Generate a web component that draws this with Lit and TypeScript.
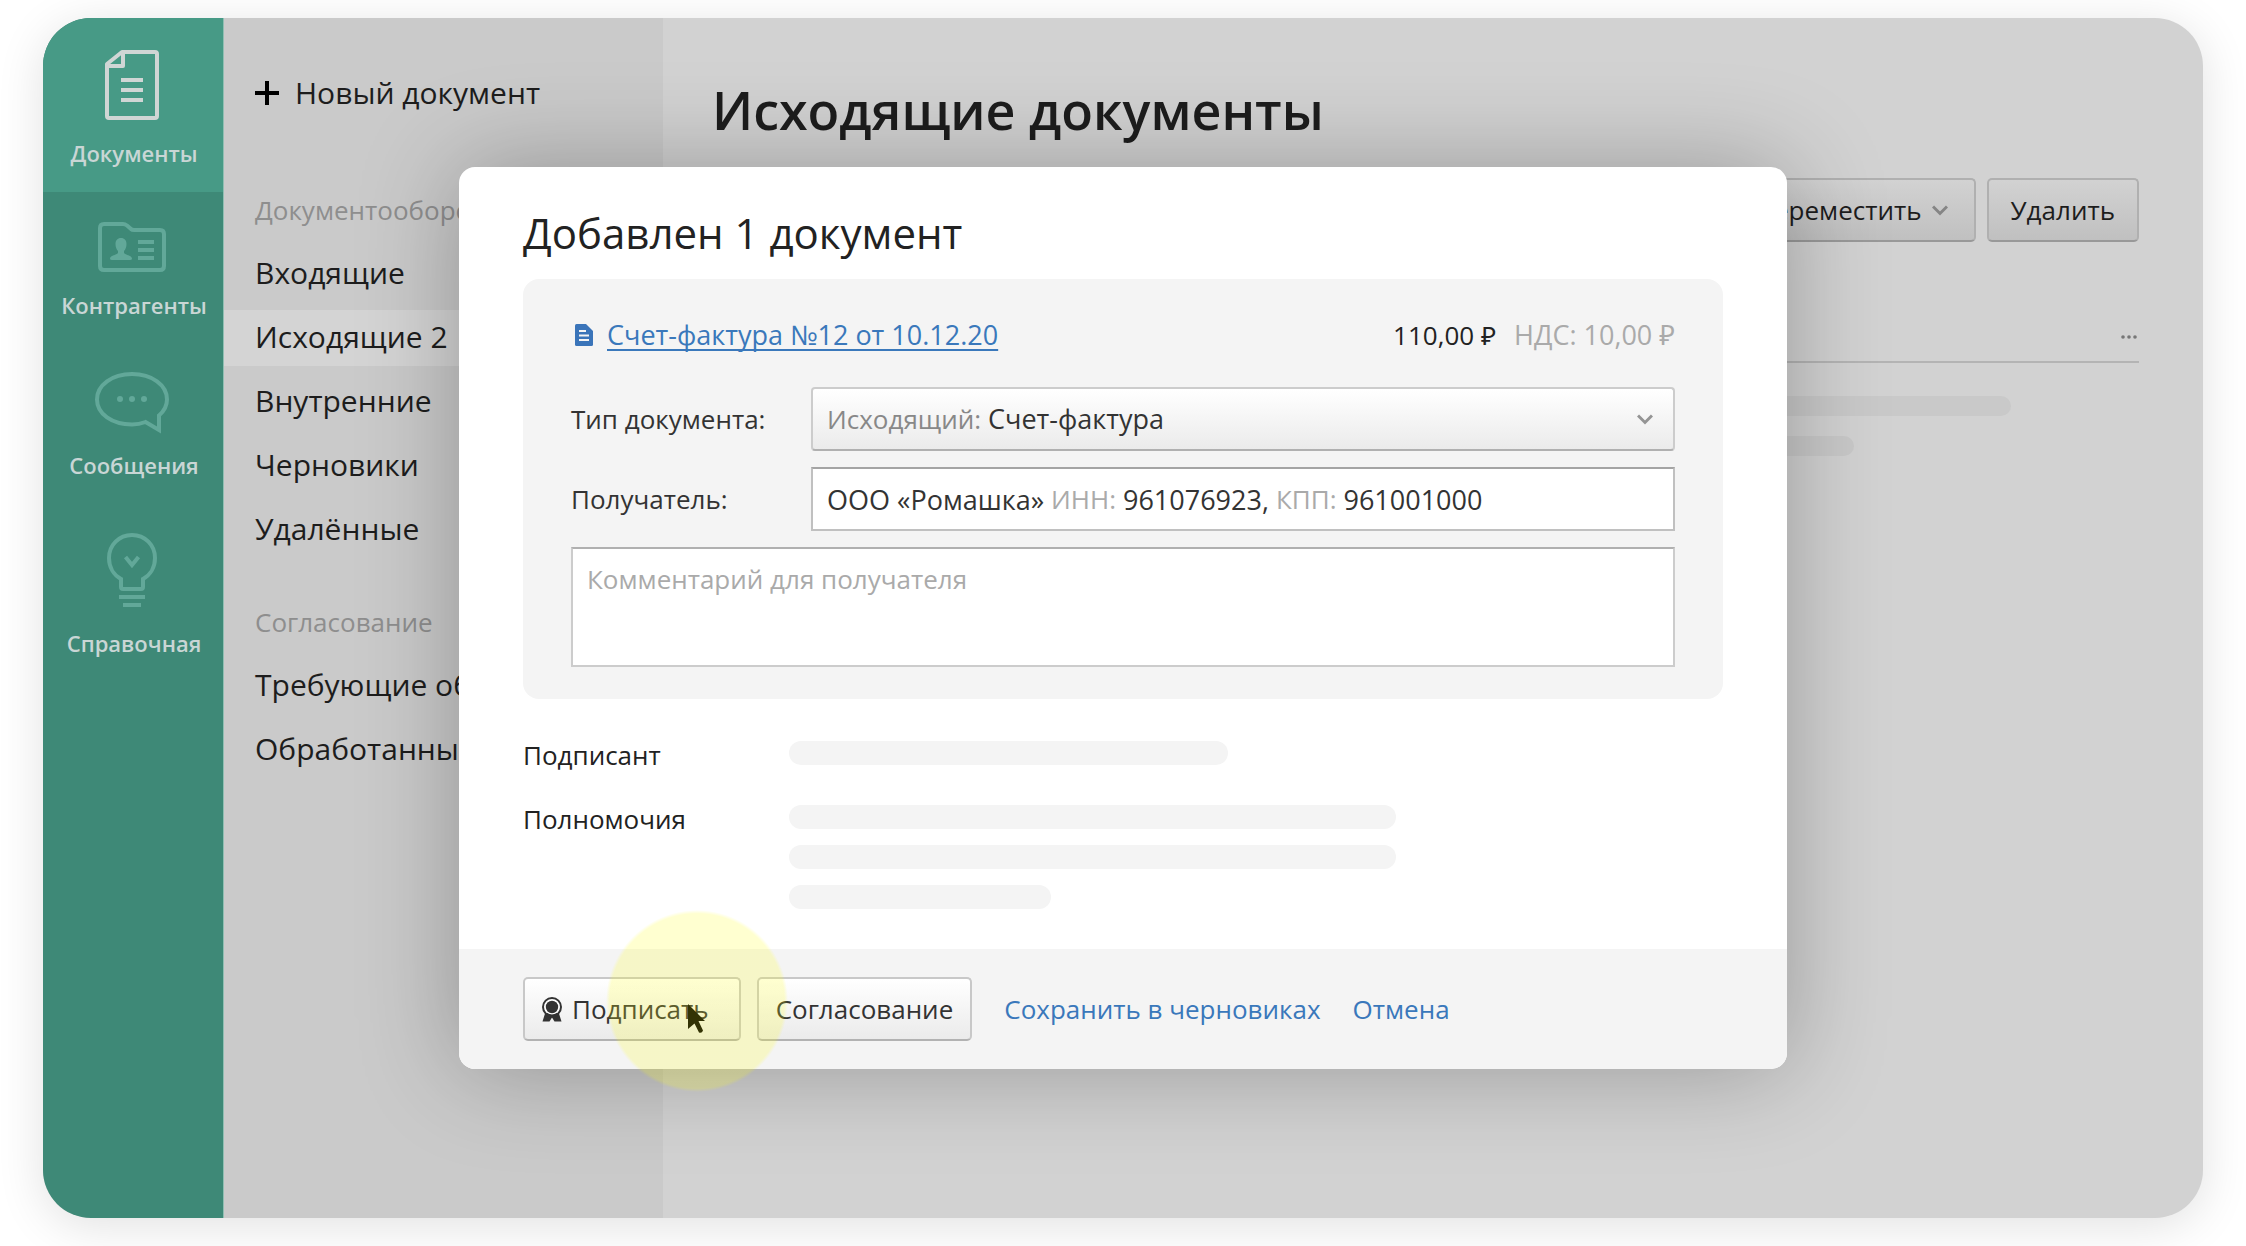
import { LitElement, html, css, svg } from "lit";
import { customElement } from "lit/decorators.js";

const icons = {
  documents: svg`<svg class="icon" width="54" height="70" viewBox="0 0 54 70" fill="none" stroke="currentColor" stroke-width="4" stroke-linejoin="round">
    <path d="M17 2H50Q52 2 52 4V66Q52 68 50 68H4Q2 68 2 66V14Z"/><path d="M18 2V16H2"/><path d="M16 30H38M16 40H38M16 50H38"/></svg>`,
  partners: svg`<svg class="icon" width="68" height="50" viewBox="0 0 68 50" fill="none" stroke="currentColor" stroke-width="4" stroke-linejoin="round">
    <path d="M6 2H25Q27 2 29 3.500L33 7Q34 8 36 8H62Q66 8 66 12V44Q66 48 62 48H6Q2 48 2 44V6Q2 2 6 2Z"/>
    <path d="M40 20H56M40 28H56M40 36H56"/>
    <path stroke="none" fill="currentColor" d="M23 16C26.500 16 28.500 18.500 28.500 22C28.500 25 27.500 27.500 26 29V31C27 33 34 33.500 34 36.500Q34 38 32 38H14Q12 38 12 36.500C12 33.500 19 33 20 31V29C18.500 27.500 17.500 25 17.500 22C17.500 18.500 19.500 16 23 16Z"/></svg>`,
  messages: svg`<svg class="icon" width="74" height="62" viewBox="0 0 74 62" fill="none" stroke="currentColor" stroke-width="4">
    <path d="M64 43.500V58L50.500 50Q44 52.500 37 52.500C17 52.500 2 42 2 27.500S17 2 37 2S72 13 72 27.500Q72 36.500 64 43.500Z"/>
    <g fill="currentColor" stroke="none"><circle cx="25" cy="27" r="3"/><circle cx="37" cy="27" r="3"/><circle cx="49" cy="27" r="3"/></g></svg>`,
  help: svg`<svg class="icon" width="50" height="74" viewBox="0 0 50 74" fill="none" stroke="currentColor" stroke-width="4">
    <path d="M14 54V46C6.500 42 2 34 2 25C2 12 12 2 25 2S48 12 48 25C48 34 43.500 42 36 46V54Q36 56 34 56H16Q14 56 14 54Z"/>
    <path d="M18.500 24L25 32L31.500 24"/><path d="M12 64H38M16 72H34"/></svg>`,
  plus: svg`<svg width="24" height="24" viewBox="0 0 24 24" stroke="#000" stroke-width="4"><path d="M12 0V24M0 12H24"/></svg>`,
  chevron: svg`<svg class="chevron" width="16" height="11" viewBox="0 0 16 11" fill="none" stroke="currentColor" stroke-width="3"><path d="M1 1.500L8 8.500L15 1.500"/></svg>`,
  file: svg`<svg width="18" height="22" viewBox="0 0 18 22"><path fill="#3a74b9" d="M1.500 0H11L18 7V20.500Q18 22 16.500 22H1.500Q0 22 0 20.500V1.500Q0 0 1.500 0Z"/><path stroke="#f4f4f4" stroke-width="2" d="M4 7H11M4 11.500H14M4 16H14"/></svg>`,
  seal: svg`<svg width="20" height="25" viewBox="0 0 20 25"><path fill="#333" d="M3.500 15L0.500 24.500H7.500L10 20.500L12.500 24.500H19.500L16.500 15Z"/><circle cx="10" cy="10" r="9" fill="#fff" stroke="#333" stroke-width="2"/><circle cx="10" cy="10" r="6.200" fill="#333"/><path d="M4 17Q10 21 16 17" fill="none" stroke="#333" stroke-width="3"/></svg>`,
  pointer: svg`<svg class="pointer" width="18" height="30" viewBox="0 0 18 30"><path fill="#000" d="M0 0L17 17H10.500L15 26.500Q14 29.500 11 28.500L6.500 19.500L0 25Z"/></svg>`,
};

const sections = [
  { label: "Документы", icon: icons.documents, cls: "documents active" },
  { label: "Контрагенты", icon: icons.partners, cls: "partners" },
  { label: "Сообщения", icon: icons.messages, cls: "messages" },
  { label: "Справочная", icon: icons.help, cls: "help" },
];

const folders = [
  { title: "Документооборот", items: ["Входящие", "Исходящие 2", "Внутренние", "Черновики", "Удалённые"] },
  { title: "Согласование", items: ["Требующие обработки", "Обработанные"] },
];

@customElement("app-root")
export class AppRoot extends LitElement {
  static styles = css`
    :host { display: block; background: #fff; overflow: hidden; font-family: "Open Sans", "Noto Sans", sans-serif; font-size: 26px; line-height: 40px; color: #222; }
    * { box-sizing: border-box; }
    button, input, select, textarea { font: inherit; color: inherit; margin: 0; }
    a { color: inherit; text-decoration: none; }
    h1, h2, h3, ul { margin: 0; padding: 0; font-weight: 400; list-style: none; }
    svg { flex: none; display: block; }
    .card { position: relative; display: flex; margin: 18px 43px 28px; min-height: calc(100vh - 46px); border-radius: 48px; background: #d2d2d2; box-shadow: 0 8px 48px rgba(0, 0, 0, 0.12); }
    .rail { flex: none; width: 181px; background: #3e8977; border-right: 1px solid #8fbfb2; border-radius: 48px 0 0 48px; overflow: hidden; color: #c9d6d5; }
    .section { display: flex; flex-direction: column; align-items: center; padding-left: 2px; font-size: 22px; font-weight: 600; line-height: 32px; }
    .section .icon { color: #62a899; margin-right: 4px; }
    .section.active { background: #479a86; }
    .section.active .icon { color: #d0d6d5; }
    .documents { height: 174px; padding-top: 32px; gap: 17px; }
    .partners { padding-top: 30px; gap: 17px; }
    .messages { padding-top: 51px; gap: 15px; }
    .help { padding-top: 52px; gap: 20px; }
    .folders { flex: none; width: 439px; background: #cacaca; padding-top: 47px; font-size: 30px; white-space: nowrap; }
    .new { display: flex; align-items: center; gap: 16px; height: 56px; padding: 0 31px; border: 0; background: none; color: #1d1d1d; }
    .group { padding-top: 44px; }
    .new + .group { padding-top: 69px; }
    .group-title { padding-left: 31px; margin-bottom: 16px; font-size: 26px; line-height: 40px; color: #8e8e8e; }
    .list { display: flex; flex-direction: column; gap: 8px; }
    .folder { display: block; height: 56px; line-height: 54px; padding-left: 31px; color: #1d1d1d; }
    .folder.current { background: #d4d4d4; }
    .main { flex: 1; min-width: 0; padding: 56px 64px 0 49px; }
    .title { font-size: 52px; line-height: 72px; font-weight: 600; color: #1d1d1d; }
    .toolbar { display: flex; justify-content: flex-end; gap: 11px; margin-top: 32px; }
    .button { display: flex; align-items: center; gap: 10px; height: 64px; padding: 0 17px; border: 2px solid #c8c8c8; border-bottom-color: #b2b2b2; border-radius: 5px; background: linear-gradient(#fff, #ebebeb); color: #333; }
    .button.sign { padding-right: 30px; }
    .toolbar .button { padding: 0 22px; border-color: #b0b0b0; border-bottom-color: #999; background: linear-gradient(#d2d2d2, #c0c0c0); color: #1d1d1d; }
    .toolbar .chevron { color: #858585; margin-right: 4px; }
    .head { display: flex; justify-content: flex-end; align-items: flex-end; height: 121px; padding-bottom: 14px; border-bottom: 2px solid #b4b4b4; }
    .more { border: 0; background: none; padding: 8px 2px; display: flex; gap: 2px; color: #777; }
    .rows { display: flex; flex-direction: column; gap: 20px; padding-top: 33px; }
    .row { height: 20px; border-radius: 10px; background: #c9c9c9; }
    .row.long { width: 91%; }
    .row.short { width: 80%; }
    .overlay { position: absolute; inset: 0; display: flex; align-items: center; justify-content: center; }
    .modal { position: relative; width: calc(100% - 160px); max-width: 1328px; border-radius: 16px; background: #fff; box-shadow: 0 0 100px rgba(0, 0, 0, 0.28); }
    .body { padding: 38px 64px 40px; }
    .modal-title { font-size: 42px; line-height: 56px; }
    .panel { margin: 18px 0 36px; padding: 36px 48px 32px; border-radius: 16px; background: #f4f4f4; color: #333; display: grid; grid-template-columns: 240px minmax(0, 1fr); row-gap: 16px; align-items: center; }
    .doc { grid-column: 1 / -1; display: flex; align-items: center; margin-bottom: 16px; padding-left: 4px; }
    .doc-link { margin-left: 14px; font-size: 27px; color: #3a78bb; text-decoration: underline; text-decoration-thickness: 2px; text-underline-offset: 4px; text-decoration-skip-ink: none; }
    .sum { margin-left: auto; color: #222; }
    .vat { margin-left: 18px; font-size: 27px; color: #aaa; }
    .field { display: flex; align-items: center; gap: 7px; height: 64px; padding: 0 14px; border: 2px solid #c0c0c0; border-top-color: #a4a4a4; background: #fff; font-size: 27px; }
    .field.pick { border-color: #ccc; border-bottom-color: #b0b0b0; border-radius: 4px; background: linear-gradient(#fff, #ebebeb); }
    .pick .chevron { color: #949494; margin-right: 6px; }
    .hint { color: #888; font-size: 26px; }
    .dim { color: #aaa; font-size: 26px; }
    .pick select { flex: 1; appearance: none; border: 0; padding: 0; background: none; outline: 0; height: 56px; }
    .value { field-sizing: content; border: 0; padding: 0; background: none; outline: 0; height: 56px; }
    .comment { grid-column: 1 / -1; display: block; width: 100%; height: 120px; padding: 10px 14px; border: 2px solid #ccc; border-top-color: #b0b0b0; border-radius: 0; resize: none; outline: 0; background: #fff; line-height: 40px; }
    .comment::placeholder { color: #aaa; opacity: 1; }
    .facts { display: grid; grid-template-columns: 266px minmax(0, 1fr); row-gap: 24px; }
    .bars { display: flex; flex-direction: column; gap: 16px; padding-top: 6px; }
    .bar { height: 24px; border-radius: 12px; background: #f4f4f4; }
    .bar.half { width: 47%; }
    .bar.wide { width: 65%; }
    .bar.small { width: 28%; }
    .footer { display: flex; align-items: center; padding: 28px 64px; background: #f4f4f4; border-radius: 0 0 16px 16px; }
    .footer .button + .button { margin-left: 16px; }
    .link { margin-left: 32px; padding: 0; border: 0; background: none; color: #3a78bb; }
    .pointer { position: absolute; left: 229px; bottom: 35px; }
    .halo { position: absolute; left: 147px; bottom: -23px; width: 182px; height: 182px; border-radius: 50%; background: radial-gradient(closest-side, rgba(255, 255, 20, 0.2) 96%, rgba(255, 255, 20, 0)); pointer-events: none; }
  `;

  render() {
    return html`
      <div class="card">
        <nav class="rail">
          ${sections.map((s) => html`<a class="section ${s.cls}" href="#">${s.icon}<span>${s.label}</span></a>`)}
        </nav>
        <nav class="folders">
          <button class="new" type="button">${icons.plus}Новый документ</button>
          ${folders.map((g) => html`
            <section class="group">
              <h3 class="group-title">${g.title}</h3>
              <ul class="list">
                ${g.items.map((i) => html`<li><a class="folder ${i === "Исходящие 2" ? "current" : ""}" href="#">${i}</a></li>`)}
              </ul>
            </section>`)}
        </nav>
        <main class="main">
          <h1 class="title">Исходящие документы</h1>
          <div class="toolbar">
            <button class="button" type="button">Переместить ${icons.chevron}</button>
            <button class="button" type="button">Удалить</button>
          </div>
          <div class="head">
            <button class="more" type="button">
              <svg width="16" height="4" viewBox="0 0 16 4" fill="currentColor"><circle cx="2" cy="2" r="1.800"/><circle cx="8" cy="2" r="1.800"/><circle cx="14" cy="2" r="1.800"/></svg>
            </button>
          </div>
          <div class="rows"><div class="row long"></div><div class="row short"></div></div>
        </main>
        <div class="overlay">
          <div class="modal" role="dialog" aria-labelledby="modal-title">
            <div class="body">
              <h2 class="modal-title" id="modal-title">Добавлен 1 документ</h2>
              <div class="panel">
                <div class="doc">
                  ${icons.file}<a class="doc-link" href="#">Счет-фактура №12 от 10.12.20</a>
                  <span class="sum">110,00 ₽</span><span class="vat">НДС: 10,00 ₽</span>
                </div>
                <label for="kind">Тип документа:</label>
                <div class="field pick">
                  <span class="hint">Исходящий:</span>
                  <select id="kind"><option>Счет-фактура</option></select>
                  ${icons.chevron}
                </div>
                <label for="recipient">Получатель:</label>
                <div class="field">
                  <input class="value" id="recipient" type="text" value="ООО «Ромашка»" />
                  <label class="dim" for="inn">ИНН:</label>
                  <input class="value" id="inn" type="text" value="961076923," />
                  <label class="dim" for="kpp">КПП:</label>
                  <input class="value" id="kpp" type="text" value="961001000" />
                </div>
                <textarea class="comment" placeholder="Комментарий для получателя"></textarea>
              </div>
              <div class="facts">
                <span>Подписант</span>
                <div class="bars"><div class="bar half"></div></div>
                <span>Полномочия</span>
                <div class="bars"><div class="bar wide"></div><div class="bar wide"></div><div class="bar small"></div></div>
              </div>
            </div>
            <div class="footer">
              <button class="button sign" type="button">${icons.seal}Подписать</button>
              <button class="button" type="button">Согласование</button>
              <button class="link" type="button">Сохранить в черновиках</button>
              <button class="link" type="button">Отмена</button>
            </div>
            ${icons.pointer}
            <div class="halo"></div>
          </div>
        </div>
      </div>
    `;
  }
}
